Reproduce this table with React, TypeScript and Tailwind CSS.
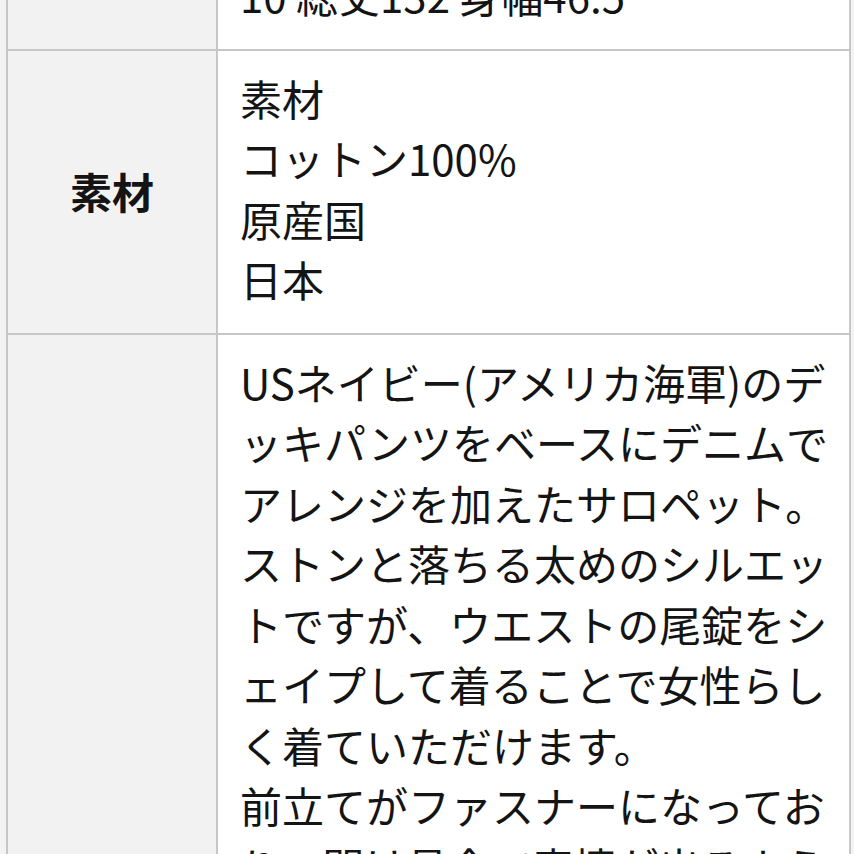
const FONT = '[font-family:"Noto_Sans_CJK_JP","Noto_Sans",sans-serif]';

const ROWS: { label: string; lines: string[] }[] = [
  { label: '', lines: ['10 総丈132 身幅46.5'] },
  { label: '素材', lines: ['素材', 'コットン100%', '原産国', '日本'] },
  {
    label: '',
    lines: [
      'USネイビー(アメリカ海軍)のデ',
      'ッキパンツをベースにデニムで',
      'アレンジを加えたサロペット。',
      'ストンと落ちる太めのシルエッ',
      'トですが、ウエストの尾錠をシ',
      'ェイプして着ることで女性らし',
      'く着ていただけます。',
      '前立てがファスナーになってお',
      'り、開け具合で表情が出るよう',
    ],
  },
];

export default function App() {
  return (
    <div className={`h-[854px] w-[854px] overflow-hidden bg-[#f2f2f2] text-[#141414] ${FONT}`}>
      {/* page is scrolled: top row only partly visible */}
      <div className="-mt-[52px] ml-[6px] w-[845px] border-x-2 border-[#c6c6c6]">
        {ROWS.map((r, i) => (
          <div key={i} className="flex border-b-2 border-[#c6c6c6]">
            <div className="flex w-[210px] shrink-0 items-center justify-center border-r-2 border-[#c6c6c6] bg-[#f2f2f2] pb-[2px] text-[42px] font-bold">
              {r.label}
            </div>
            <div className="flex-1 bg-white pt-[17px] pb-[23px] pl-[22px] text-[42px] font-normal leading-[60.5px]">
              {r.lines.map((l) => (
                <div key={l} className="whitespace-nowrap">
                  {l}
                </div>
              ))}
            </div>
          </div>
        ))}
      </div>
    </div>
  );
}
